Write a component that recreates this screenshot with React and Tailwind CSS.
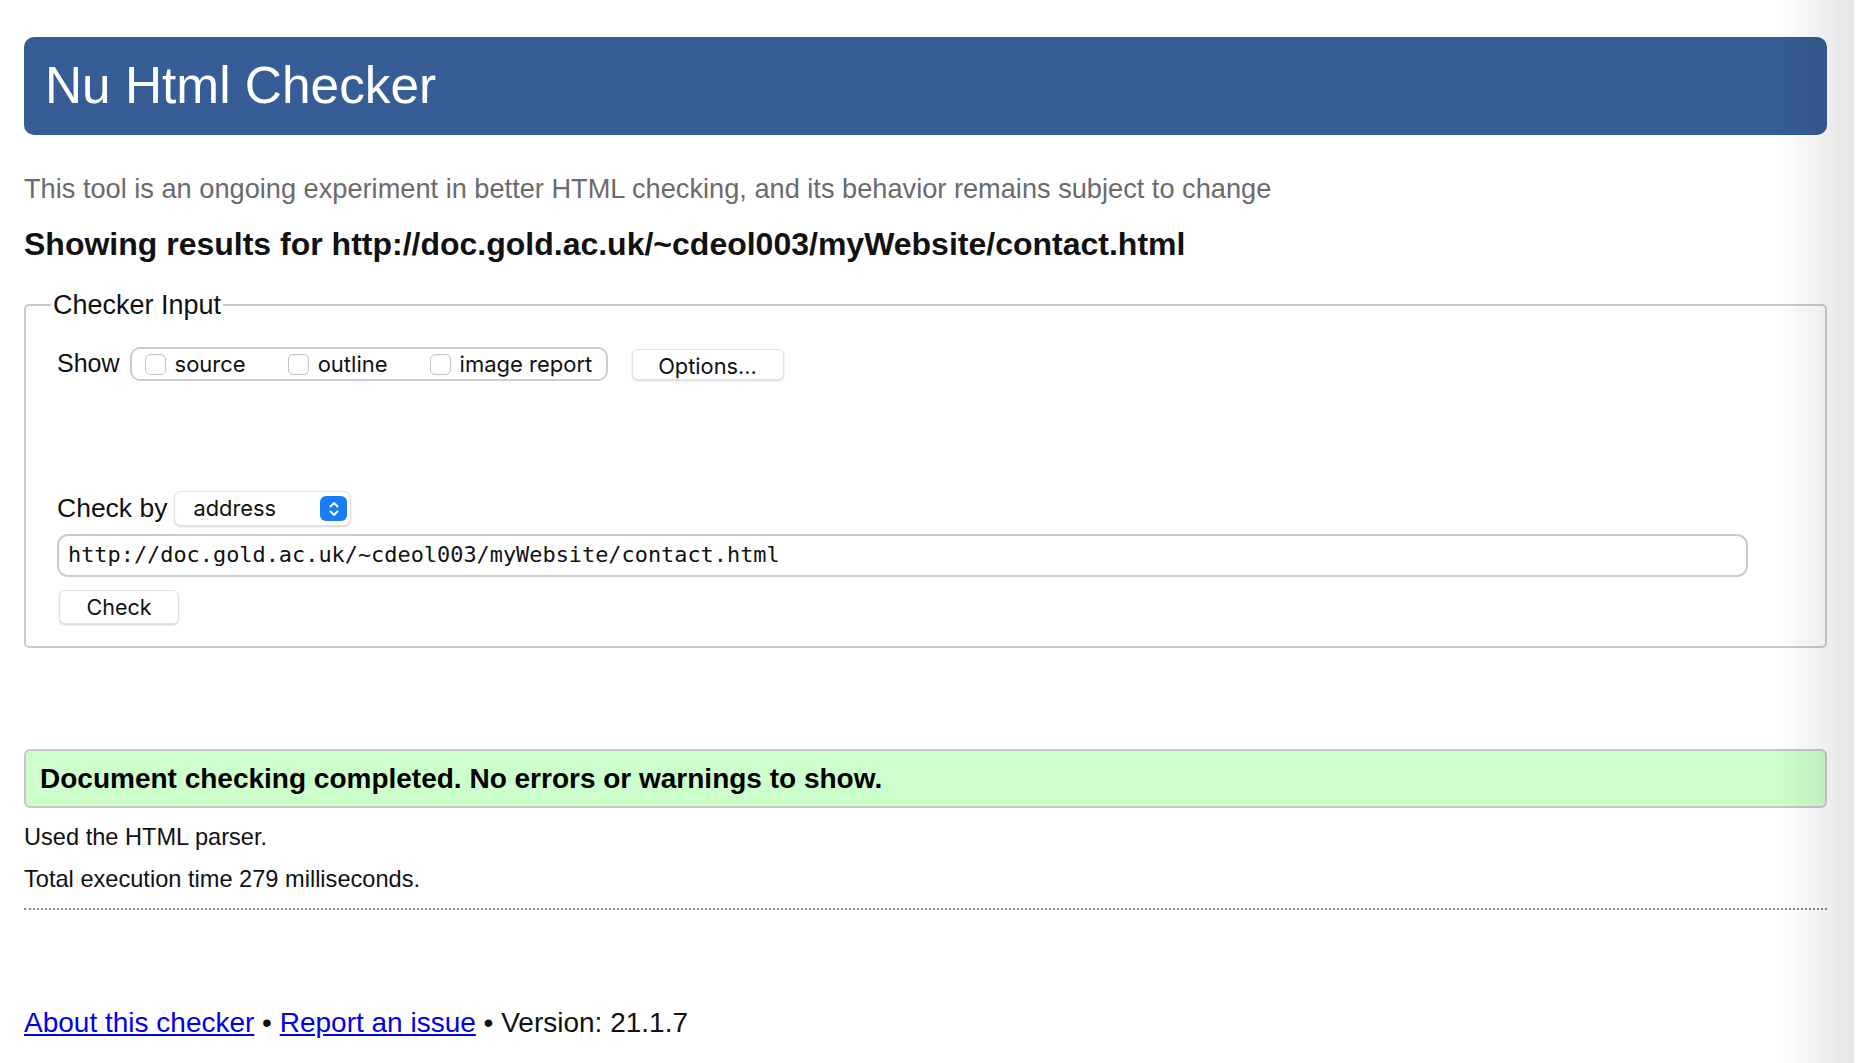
import { useState } from 'react';

const sans = { fontFamily: '"Liberation Sans", Arial, sans-serif' };
const ui = { fontFamily: 'Inter, "Liberation Sans", sans-serif' };

function Box({ checked, onChange, label, last }) {
  return (
    <label className={`flex items-center gap-[9px] ${last ? '' : 'mr-[42px]'}`}>
      <span
        onClick={onChange}
        className="w-[21px] h-[21px] rounded-[5px] border border-[#c4c4c4] bg-white shadow-[inset_0_1px_1px_rgba(0,0,0,0.05)]"
      />
      <span style={ui} className="text-[22px] text-[#111]">{label}</span>
    </label>
  );
}

function SelectArrow() {
  return (
    <span className="w-[27px] h-[25px] rounded-[6px] bg-[#1a7df6] flex items-center justify-center">
      <svg width="12" height="18" viewBox="0 0 12 18" fill="none" stroke="white" strokeWidth="2" strokeLinecap="round" strokeLinejoin="round">
        <path d="M2.5 6.5 L6 3 L9.5 6.5" />
        <path d="M2.5 11.5 L6 15 L9.5 11.5" />
      </svg>
    </span>
  );
}

export default function App() {
  const [show, setShow] = useState({ source: false, outline: false, image: false });
  const toggle = (k) => setShow((s) => ({ ...s, [k]: !s[k] }));

  return (
    <div className="min-h-screen bg-white relative text-[#111]" style={sans}>
      <div className="pl-[24px] pr-[30px] pt-[37px]">
        {/* Banner */}
        <h1 className="h-[98px] rounded-[10px] bg-[#365d95] text-white text-[51.4px] flex items-center pl-[21px] leading-none">
          Nu Html Checker
        </h1>

        <p className="mt-[38px] text-[27.2px] leading-[32px] text-[#6b6b6b]">
          This tool is an ongoing experiment in better HTML checking, and its behavior remains subject to change
        </p>

        <h2 className="mt-[20px] text-[32px] leading-[38px] font-bold text-[#111]">
          Showing results for http://doc.gold.ac.uk/~cdeol003/myWebsite/contact.html
        </h2>

        {/* Checker input */}
        <fieldset className="mt-[26px] border-2 border-[#cbcbcb] rounded-[5px] pl-[31px] pr-[20px] pb-[22px]">
          <legend className="-ml-[6px] px-[2px] text-[27px] leading-[32px]">Checker Input</legend>

          <div className="mt-[26px] flex items-center h-[34px]">
            <span className="text-[25px] mr-[10px]">Show</span>
            <div className="h-[34px] w-[478px] border-2 border-[#cdcdcd] rounded-[10px] flex items-center pl-[13px]">
              <Box label="source" checked={show.source} onChange={() => toggle('source')} />
              <Box label="outline" checked={show.outline} onChange={() => toggle('outline')} />
              <Box label="image report" checked={show.image} onChange={() => toggle('image')} last />
            </div>
            <button
              style={ui}
              className="ml-[24px] h-[31px] w-[152px] rounded-[6px] bg-white border border-[#e2e2e2] shadow-[0_1px_2px_rgba(0,0,0,0.18)] text-[21.8px] text-[#111]"
            >
              Options...
            </button>
          </div>

          <div className="mt-[110px] flex items-center h-[35px]">
            <span className="text-[26.5px] mr-[7px]">Check by</span>
            <div className="h-[35px] w-[177px] rounded-[7px] bg-white border border-[#e2e2e2] shadow-[0_1px_2px_rgba(0,0,0,0.18)] flex items-center justify-between pl-[18px] pr-[3px]">
              <span style={ui} className="text-[21.8px] text-[#111]">address</span>
              <SelectArrow />
            </div>
          </div>

          <div className="mt-[8px] h-[43px] w-[1691px] border-2 border-[#cbcbcb] rounded-[11px] flex items-center pl-[9px]">
            <span style={{ fontFamily: '"DejaVu Sans Mono", monospace' }} className="text-[21.9px] text-[#111]">
              http://doc.gold.ac.uk/~cdeol003/myWebsite/contact.html
            </span>
          </div>

          <button
            style={ui}
            className="mt-[13px] ml-[2px] h-[34px] w-[120px] rounded-[6px] bg-white border border-[#e2e2e2] shadow-[0_1px_2px_rgba(0,0,0,0.18)] text-[21.5px] text-[#111]"
          >
            Check
          </button>
        </fieldset>

        {/* Result */}
        <div className="mt-[101px] h-[59px] border-2 border-[#c9c9c9] rounded-[6px] bg-[#ccffcc] flex items-center pl-[14px]">
          <span className="text-[28px] font-bold text-[#000]">
            Document checking completed. No errors or warnings to show.
          </span>
        </div>

        <p className="mt-[15px] text-[23.6px] leading-[28px]">Used the HTML parser.</p>
        <p className="mt-[14px] text-[23.6px] leading-[28px]">Total execution time 279 milliseconds.</p>

        <div className="mt-[15px] border-t-2 border-dotted border-[#8a8a8a]" />

        <p className="mt-[97px] text-[28px] leading-[32px]">
          <a href="#" className="text-[#0000ee] underline">About this checker</a>
          {' • '}
          <a href="#" className="text-[#0000ee] underline">Report an issue</a>
          {' • Version: 21.1.7'}
        </p>
      </div>

      {/* scroll shadow at the right edge */}
      <div className="fixed top-0 right-[3px] h-full w-[78px] bg-gradient-to-r from-black/0 to-black/10 pointer-events-none" />
    </div>
  );
}
